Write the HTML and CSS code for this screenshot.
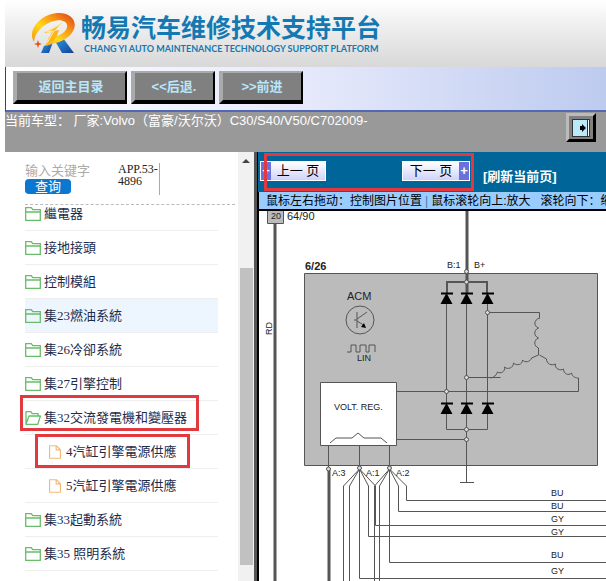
FILE: index.html
```html
<!DOCTYPE html>
<html lang="zh">
<head>
<meta charset="utf-8">
<title>畅易汽车维修技术支持平台</title>
<link rel="stylesheet" href="styles.css">
</head>
<body>
<svg class="defs" aria-hidden="true">
  <symbol id="folder" viewBox="0 0 16 14"><path d="M.7 13.3V.7h5.600l1.400 2h7.600v10.600zM.7 5h14.600" fill="none" stroke="#68bd68" stroke-width="1.3"/></symbol>
  <symbol id="folder-open" viewBox="0 0 16 14"><path d="M1 12.500V.7h4.800l1.400 2h6V5M1 13.300 4 5h11.400l-2.600 8.300z" fill="none" stroke="#68bd68" stroke-width="1.3" stroke-linejoin="round"/></symbol>
  <symbol id="file" viewBox="0 0 14 16"><path d="M.8.8h7.700l4.700 4.600v9.800H.8zM8.300.8v4.800h4.900" fill="none" stroke="#f6b878" stroke-width="1.3" stroke-linejoin="round"/></symbol>
</svg>
<div class="page">
  <header class="banner">
    <svg class="logo" viewBox="0 0 46 42" aria-hidden="true">
      <defs>
        <linearGradient id="flame" x1="0" y1="1" x2="1" y2="0"><stop offset="0" stop-color="#f28a12"/><stop offset=".4" stop-color="#ffd91c"/><stop offset=".65" stop-color="#f99a18"/><stop offset="1" stop-color="#dd3a12"/></linearGradient>
        <linearGradient id="leg" x1="0" y1="0" x2="1" y2="1"><stop offset="0" stop-color="#2e9be0"/><stop offset="1" stop-color="#123f9c"/></linearGradient>
      </defs>
      <path d="M25 29l8-3 11 15H32z" fill="url(#leg)"/>
      <path d="M14 34l9-4-4 11H11z" fill="url(#leg)"/>
      <path d="M4 30C-3 19 9 3 27 1c14-1 20 8 17 16-3 8-12 13-22 15l-6 2 3-9c9 0 17-4 18-10 1-5-5-8-13-6C13 12 5 20 4 30z" fill="url(#flame)"/>
      <path d="M32 11l-18 10 8-1-7 14c9-4 12-9 14-16l-5 1z" fill="#fbb41c"/>
      <path d="M31 12l-14 8 7-1-7 12" fill="none" stroke="#fff0a0"/>
      <path d="M8 28l1 3 3 1-3 1-1 3-1-3-3-1 3-1z" fill="#e8501c"/>
    </svg>
    <div>
      <h1>畅易汽车维修技术支持平台</h1>
      <p>CHANG YI AUTO MAINTENANCE TECHNOLOGY SUPPORT PLATFORM</p>
    </div>
  </header>
  <nav class="toolbar">
    <button class="wide">返回主目录</button>
    <button>&lt;&lt;后退.</button>
    <button>&gt;&gt;前进</button>
  </nav>
  <div class="vehicle">
    <span>当前车型： 厂家:Volvo（富豪/沃尔沃）C30/S40/V50/C702009-</span>
    <button aria-label="切换侧栏"><svg viewBox="0 0 18 18"><path d="M0 0h18v18H0z" fill="#b9e9fa"/><path d="M15 0h3v18h-3z" fill="#fff"/><path d="M15.500 0v18M17.500 0v18M0 .5h18M.5 0v18M0 17.500h18" stroke="#333" fill="none"/><path d="M8 7h2V5l4 4-4 4v-2H8z" fill="#000"/></svg></button>
  </div>
  <main class="work">
    <aside class="side">
      <div class="side-body">
        <form class="search">
          <div class="query">
            <input type="text" aria-label="关键字" placeholder="输入关键字">
            <button type="button">查询</button>
          </div>
          <span class="code">APP.53-4896</span>
        </form>
        <div class="tree">
          <ul>
            <li><a href="#"><svg><use href="#folder"/></svg>繼電器</a></li>
            <li><a href="#"><svg><use href="#folder"/></svg>接地接頭</a></li>
            <li><a href="#"><svg><use href="#folder"/></svg>控制模組</a></li>
            <li class="hover"><a href="#"><svg><use href="#folder"/></svg>集23燃油系統</a></li>
            <li><a href="#"><svg><use href="#folder"/></svg>集26冷卻系統</a></li>
            <li><a href="#"><svg><use href="#folder"/></svg>集27引擎控制</a></li>
            <li><a href="#"><svg><use href="#folder-open"/></svg>集32交流發電機和變壓器</a><i class="mark mark-group"></i></li>
            <li class="leaf"><a href="#"><svg><use href="#file"/></svg>4汽缸引擎電源供應</a><i class="mark mark-leaf"></i></li>
            <li class="leaf"><a href="#"><svg><use href="#file"/></svg>5汽缸引擎電源供應</a></li>
            <li><a href="#"><svg><use href="#folder"/></svg>集33起動系統</a></li>
            <li><a href="#"><svg><use href="#folder"/></svg>集35 照明系統</a></li>
            <li></li>
          </ul>
        </div>
      </div>
      <div class="scroll"><svg class="up" viewBox="0 0 8 4"><path d="M4 0l4 4H0z" fill="#444"/></svg><div class="thumb"></div></div>
    </aside>
    <section class="viewer">
      <div class="pager">
        <button class="prev"><b>+</b><span>上一 页</span></button>
        <button class="next"><span>下一 页</span><b>+</b></button>
        <a href="#">[刷新当前页]</a>
        <i class="mark mark-pager"></i>
      </div>
      <p class="hint">鼠标左右拖动：控制图片位置<em>|</em>鼠标滚轮向上:放大 &nbsp; 滚轮向下：缩小</p>
      <div class="canvas">
        <svg class="diagram" viewBox="259 211 347 370" role="img" aria-label="6/26 ACM">
          <g stroke="#555" fill="none">
            <path d="M267.500 205h16v18.500h-16z" fill="#bbb"/>
            <path d="M275 224v360" stroke-width="3"/>
            <path d="M304.500 273.500h293v192h-293z" fill="#bbb"/>
            <path d="M320.500 382.500h76v63h-76z" fill="#fff"/>
            <path d="M467 211v82" stroke-width="3"/>
            <path d="M447 293v-11h40v11" stroke-width="2"/>
            <path d="M446.500 304v125.500h41V304M466.500 304v178M460 482.500h14M396.500 391.500h182V378M396.500 439.500h70M487.500 312.500h52v6M466.500 377.500h34"/>
            <path d="M539.500 318c-6 2-6 8-1 10-5 2-5 8 0 10-5 2-5 8 0 10v7l-7 3c-1 4-7 5-9 2 0 5-6 6-9 3 0 5-6 7-9 4 1 5-4 7-7 5-1 3-4 6-7 6M539.500 355l7 4c0 5 5 7 9 5-1 5 5 7 8 5 0 5 5 7 8 4 1 4 4 5 7 5"/>
            <path d="M330 443l6-5h16l6-5 6 5h17l6 5"/>
            <path d="M328.500 446v22M359.500 446v23M389.500 446v23"/>
            <path d="M329 470v115" stroke-width="3"/>
            <path d="M359.500 469v109.500H610M359.500 469l-16 17v100M359.500 469l-10 17v100M359.500 469l9 17v50.500H610M359.500 469l16 17v39.500H610M389.500 469v93.500H610M389.500 469l-15 17v100M389.500 469l-10 17v100M389.500 469l9 17v25.500H610M389.500 469l17 17v14.500H610"/>
            <circle cx="360" cy="320" r="14"/><path d="M357 312v16M354 320h3M357 319l10-7M357 321l8 5M347 352h4v-7h5v7h4v-7h6v7h3v-7h6v7"/>
          </g>
          <path d="M366 328l-5-1 3-4z"/>
          <g id="diodes"><path d="M446.500 293l6 11h-12zM466.500 293l6 11h-12zM487.500 293l6 11h-12z"/><path d="M441 293.500h12M461 293.500h12M482 293.500h12" stroke="#000" stroke-width="2"/></g>
          <use href="#diodes" y="110"/>
          <g fill="#ddd" stroke="#555"><circle cx="466.500" cy="271.500" r="2"/><circle cx="466.500" cy="282" r="2"/><circle cx="487.500" cy="312.500" r="2"/><circle cx="466.500" cy="377.500" r="2"/><circle cx="446.500" cy="391.500" r="2"/><circle cx="466.500" cy="429.500" r="2"/><circle cx="466.500" cy="439.500" r="2"/><circle cx="328.500" cy="469" r="2"/><circle cx="359.500" cy="468" r="2"/><circle cx="389.500" cy="468" r="2"/></g>
          <g class="labels">
            <text x="271" y="219" class="s">20</text><text x="287" y="220" class="m">64/90</text>
            <text x="305" y="270" class="m bold">6/26</text><text x="347" y="300" class="m">ACM</text>
            <text x="357" y="361" class="s">LIN</text><text x="334" y="410" class="s">VOLT. REG.</text>
            <text x="447" y="268" class="s">B:1</text><text x="474" y="268" class="s">B+</text>
            <text x="332" y="476" class="s">A:3</text><text x="366" y="476" class="s">A:1</text><text x="396" y="476" class="s">A:2</text>
            <text transform="translate(272 335) rotate(-90)" class="s">RD</text>
            <g class="s"><text x="551" y="496">BU</text><text x="551" y="509">BU</text><text x="551" y="522">GY</text><text x="551" y="535">GY</text><text x="551" y="558">BU</text><text x="551" y="574">GY</text></g>
          </g>
        </svg>
      </div>
    </section>
  </main>
</div>
</body>
</html>
```
FILE: styles.css
```css
* { box-sizing: border-box; }
body { margin: 0; background: #fff; font: 13px/16px "Liberation Sans", "Noto Sans CJK SC", sans-serif; }
button, input { font: inherit; margin: 0; padding: 0; }
.defs { position: absolute; width: 0; height: 0; }
.page { display: flex; flex-direction: column; height: 100vh; overflow: hidden; padding-left: 5px; }

.banner { display: flex; gap: 5px; height: 67px; padding: 12px 25px; background: linear-gradient(#fff, #f0f0f0 35%, #d8d8d8); color: #1479b2; flex: none; }
.logo { width: 46px; height: 42px; flex: none; }
.banner h1 { margin: 0; font: bold 25px/28px "Noto Sans CJK SC", sans-serif; white-space: nowrap; }
.banner p { margin: 0 0 0 3px; font: bold 9px/18px Lato, sans-serif; white-space: nowrap; }

.toolbar { display: flex; gap: 4px; height: 45px; padding: 4px 7px; flex: none; border-left: 1px solid #444; border-bottom: 2px solid #5368b4; background: linear-gradient(90deg, #fff, #e6e9fb 50%, #bdcbef); }
.toolbar button { width: 84px; height: 33px; background: #808080; border: solid; border-width: 2px 2px 4px 4px; border-color: #aaa #000 #000 #aaa; color: #b9e6fb; font-weight: bold; }
.toolbar .wide { width: 114px; }

.vehicle { display: flex; justify-content: space-between; height: 40px; padding: 1px 10px 0 0; background: #999; color: #fff; flex: none; white-space: nowrap; }
.vehicle button { width: 30px; height: 29px; background: #808080; border: 3px solid; border-color: #bbb #000 #000 #bbb; display: grid; place-items: center; }
.vehicle svg { width: 18px; height: 18px; }

.work { display: flex; flex: 1; min-height: 0; }
.side { display: flex; width: 252px; flex: none; border-right: 3px solid #555; }
.side-body { flex: 1; min-width: 0; display: flex; flex-direction: column; padding-left: 20px; }
.search { display: flex; gap: 23px; height: 53px; margin-right: 3px; padding-top: 11px; border-bottom: 1px dashed #bbb; flex: none; }
.query { display: flex; flex-direction: column; align-items: flex-start; width: 70px; }
.query input { width: 70px; height: 16px; border: 0; background: none; }
.query input::placeholder { color: #aaa; opacity: 1; }
.query button { width: 46px; height: 15px; border: 0; border-radius: 4px; background: #0a78d1; color: #fff; line-height: 15px; }
.code { width: 42px; height: 32px; border-right: 1px solid #aaa; font: 12px/12px "Liberation Serif", serif; color: #222; }
.tree { flex: 1; min-height: 0; overflow: hidden; margin-left: -5px; padding-left: 5px; }
.tree ul { list-style: none; margin: -8px 20px 0 0; padding: 0; font: 13px/16px "Liberation Serif", "Noto Sans CJK TC", serif; }
.tree li { position: relative; height: 34px; border-bottom: 1px solid #eee; }
.tree a { display: flex; align-items: center; gap: 3px; height: 33px; color: #1d2c4d; text-decoration: none; white-space: pre; }
.tree a svg { width: 16px; height: 14px; flex: none; }
.tree .hover { background: #edf6fe; }
.tree .leaf a { padding-left: 22px; }
.scroll { width: 16px; flex: none; background: #f1f1f1; padding: 7px 1px 16px; display: flex; flex-direction: column; align-items: center; }
.up { width: 8px; height: 4px; flex: none; }
.thumb { width: 13px; flex: 1; margin-top: 105px; background: #c1c1c1; }

.mark { position: absolute; border: 3px solid #e2393f; pointer-events: none; }
.mark-group { left: -5px; top: -6px; width: 179px; height: 36px; }
.mark-leaf { left: 10px; top: -1px; width: 155px; height: 34px; z-index: 1; }
.mark-pager { left: 6px; top: 1px; width: 210px; height: 38px; }

.viewer { flex: 1; min-width: 0; display: flex; flex-direction: column; background: #000; border-left: 1px solid #000; }
.pager { position: relative; display: flex; gap: 76px; height: 40px; padding: 9px 0 0 2px; background: #069; flex: none; white-space: nowrap; }
.pager button { display: flex; height: 20px; border: 1px solid #fff; background: linear-gradient(#fff, #cfd3f8); line-height: 18px; }
.pager button span { flex: 1; }
.pager b { width: 10px; background: #6a70dc; color: #fff; }
.prev { width: 66px; }
.next { width: 68px; }
.pager a { margin: 8px 0 0 -63px; color: #fff; font-weight: bold; text-decoration: none; }
.hint { margin: 0 0 0 1px; padding-left: 7px; height: 17px; background: #9cf; font-size: 12px; line-height: 19px; white-space: nowrap; overflow: hidden; flex: none; }
.hint em { font-style: normal; color: #579; padding: 0 3px; }
.canvas { flex: 1; min-height: 0; margin: 2px 0 0 1px; background: #fff; overflow: hidden; }
.diagram { display: block; width: 347px; height: 370px; }
.labels { font-family: "Liberation Sans", sans-serif; fill: #222; }
.s { font-size: 9px; }
.m { font-size: 11px; }
.bold { font-weight: bold; }
```
